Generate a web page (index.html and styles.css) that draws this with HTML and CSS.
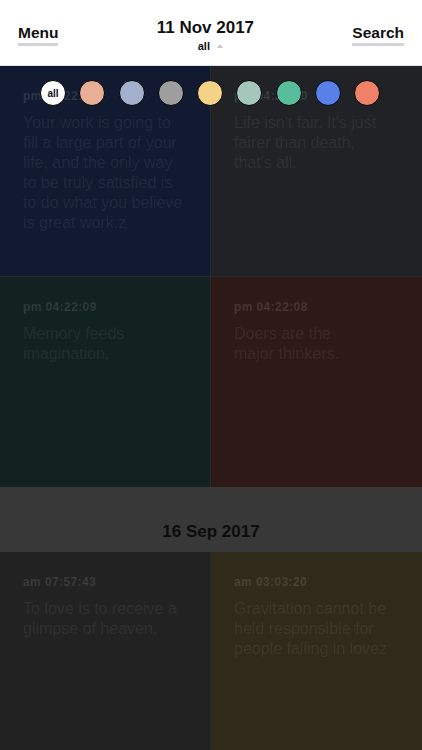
FILE: index.html
```html
<!DOCTYPE html>
<html>
<head>
<meta charset="utf-8">
<link rel="stylesheet" href="styles.css">
</head>
<body>
<header class="topbar">
  <div class="navbtn">Menu</div>
  <div class="title">
    <div class="date">11 Nov 2017</div>
    <div class="filter">all <span class="caret"></span></div>
  </div>
  <div class="navbtn">Search</div>
</header>
<main class="feed">
  <div class="palette">
    <span class="dot all">all</span>
    <span class="dot c1"></span>
    <span class="dot c2"></span>
    <span class="dot c3"></span>
    <span class="dot c4"></span>
    <span class="dot c5"></span>
    <span class="dot c6"></span>
    <span class="dot c7"></span>
    <span class="dot c8"></span>
  </div>
  <section class="grid">
    <article class="card navy">
      <div class="time">pm 04:22:59</div>
      <p class="quote">Your work is going to<br>fill a large part of your<br>life, and the only way<br>to be truly satisfied is<br>to do what you believe<br>is great work.z</p>
    </article>
    <article class="card slate">
      <div class="time">pm 04:22:10</div>
      <p class="quote">Life isn't fair. It's just<br>fairer than death,<br>that's all.</p>
    </article>
    <article class="card green">
      <div class="time">pm 04:22:09</div>
      <p class="quote">Memory feeds<br>imagination.</p>
    </article>
    <article class="card maroon">
      <div class="time">pm 04:22:08</div>
      <p class="quote">Doers are the<br>major thinkers.</p>
    </article>
  </section>
  <div class="dayband">16 Sep 2017</div>
  <section class="grid">
    <article class="card charcoal">
      <div class="time">am 07:57:43</div>
      <p class="quote">To love is to receive a<br>glimpse of heaven.</p>
    </article>
    <article class="card olive">
      <div class="time">am 03:03:20</div>
      <p class="quote">Gravitation cannot be<br>held responsible for<br>people falling in lovez</p>
    </article>
  </section>
</main>
</body>
</html>
```
FILE: styles.css
```css
* { box-sizing: border-box; }
html, body { margin: 0; padding: 0; }
body {
  width: 422px;
  height: 750px;
  overflow: hidden;
  background: #2a2a2a;
  font-family: "Liberation Sans", Arial, sans-serif;
}
.topbar {
  height: 66px;
  background: #ffffff;
  border-bottom: 1px solid #e2e2e6;
  display: flex;
  justify-content: space-between;
  align-items: flex-start;
  padding: 0 18px;
}
.navbtn {
  margin-top: 24px;
  font-size: 15.5px;
  font-weight: bold;
  color: #111;
  line-height: 17px;
  padding-bottom: 2px;
  border-bottom: 3px solid #d3d3db;
}
.title {
  margin-top: 18px;
  text-align: center;
}
.date {
  font-size: 17px;
  font-weight: bold;
  color: #111;
  line-height: 20px;
}
.filter {
  font-size: 11px;
  font-weight: bold;
  color: #111;
  line-height: 14px;
  margin-top: 1px;
  padding-left: 10px;
}
.caret {
  display: inline-block;
  width: 0;
  height: 0;
  margin-left: 4px;
  vertical-align: 2px;
  border-left: 3px solid transparent;
  border-right: 3px solid transparent;
  border-bottom: 4px solid #c8c8cc;
}
.feed {
  position: relative;
}
.palette {
  position: absolute;
  top: 14px;
  left: 40px;
  display: flex;
  gap: 13.3px;
  z-index: 2;
}
.dot {
  width: 26px;
  height: 26px;
  border-radius: 50%;
  border: 1px solid #000;
  display: flex;
  align-items: center;
  justify-content: center;
  font-size: 10px;
  font-weight: bold;
  color: #111;
}
.dot.all { background: #ffffff; }
.c1 { background: #e8ae96; }
.c2 { background: #a3b1cf; }
.c3 { background: #9e9e9e; }
.c4 { background: #f4d286; }
.c5 { background: #a4c6bb; }
.c6 { background: #58bd9a; }
.c7 { background: #5781e8; }
.c8 { background: #ef8168; }
.grid {
  display: grid;
  grid-template-columns: 210px 211px;
  gap: 1px;
  background: #2a2a2a;
}
.card {
  height: 210px;
  padding: 23px 20px 0 23px;
}
.grid + .dayband + .grid .card { height: 220px; }
.time {
  font-size: 12px;
  font-weight: bold;
  line-height: 15px;
  letter-spacing: 0.4px;
  color: rgba(255, 255, 255, 0.12);
}
.quote {
  margin: 9px 0 0;
  font-size: 16px;
  line-height: 20px;
  color: rgba(255, 255, 255, 0.075);
}
.navy { background: #111a30; }
.slate { background: #212226; }
.green { background: #12221f; }
.maroon { background: #2d1a16; }
.charcoal { background: #222222; }
.olive { background: #2f2a1a; }
.dayband {
  height: 65px;
  background: #383838;
  display: flex;
  align-items: center;
  justify-content: center;
  font-size: 17px;
  font-weight: bold;
  color: #0c0c0c;
  padding-top: 24px;
}
```
